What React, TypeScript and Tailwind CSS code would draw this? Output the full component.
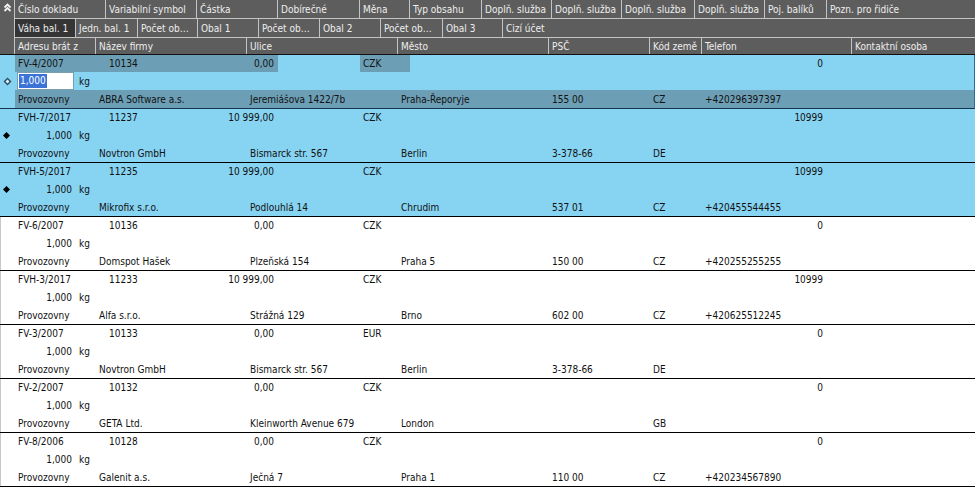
import React from 'react';

const FONT = "font-['DejaVu_Sans_Condensed','Liberation_Sans',sans-serif]";

// column widths (px) incl. the 1px separator at the right edge
const ROW1 = [91, 91, 81, 82, 50, 72, 70, 70, 73, 70, 62];
const ROW2 = [61, 62, 60, 61, 61, 61, 62, 60];
const ROW3 = [81, 151, 151, 151, 101, 52, 150];

const HEAD1 = ['Číslo dokladu', 'Variabilní symbol', 'Částka', 'Dobírečné', 'Měna', 'Typ obsahu', 'Doplň. služba', 'Doplň. služba', 'Doplň. služba', 'Doplň. služba', 'Poj. balíků', 'Pozn. pro řidiče'];
const HEAD2 = ['Váha bal. 1', 'Jedn. bal. 1', 'Počet ob…', 'Obal 1', 'Počet ob…', 'Obal 2', 'Počet ob…', 'Obal 3', 'Cizí účet'];
const HEAD3 = ['Adresu brát z', 'Název firmy', 'Ulice', 'Město', 'PSČ', 'Kód země', 'Telefon', 'Kontaktní osoba'];

type Rec = {
  doc: string; vs: string; amt: string; cur: string; poj: string;
  firm: string; street: string; city: string; zip: string; cc: string; tel: string;
  state?: 'active' | 'sel';
};

const RECORDS: Rec[] = [
  { doc: 'FV-4/2007', vs: '10134', amt: '0,00', cur: 'CZK', poj: '0', firm: 'ABRA Software a.s.', street: 'Jeremiášova 1422/7b', city: 'Praha-Řeporyje', zip: '155 00', cc: 'CZ', tel: '+420296397397', state: 'active' },
  { doc: 'FVH-7/2017', vs: '11237', amt: '10 999,00', cur: 'CZK', poj: '10999', firm: 'Novtron GmbH', street: 'Bismarck str. 567', city: 'Berlin', zip: '3-378-66', cc: 'DE', tel: '', state: 'sel' },
  { doc: 'FVH-5/2017', vs: '11235', amt: '10 999,00', cur: 'CZK', poj: '10999', firm: 'Mikrofix s.r.o.', street: 'Podlouhlá 14', city: 'Chrudim', zip: '537 01', cc: 'CZ', tel: '+420455544455', state: 'sel' },
  { doc: 'FV-6/2007', vs: '10136', amt: '0,00', cur: 'CZK', poj: '0', firm: 'Domspot Hašek', street: 'Plzeňská 154', city: 'Praha 5', zip: '150 00', cc: 'CZ', tel: '+420255255255' },
  { doc: 'FVH-3/2017', vs: '11233', amt: '10 999,00', cur: 'CZK', poj: '10999', firm: 'Alfa s.r.o.', street: 'Strážná 129', city: 'Brno', zip: '602 00', cc: 'CZ', tel: '+420625512245' },
  { doc: 'FV-3/2007', vs: '10133', amt: '0,00', cur: 'EUR', poj: '0', firm: 'Novtron GmbH', street: 'Bismarck str. 567', city: 'Berlin', zip: '3-378-66', cc: 'DE', tel: '' },
  { doc: 'FV-2/2007', vs: '10132', amt: '0,00', cur: 'CZK', poj: '0', firm: 'GETA Ltd.', street: 'Kleinworth Avenue 679', city: 'London', zip: '', cc: 'GB', tel: '' },
  { doc: 'FV-8/2006', vs: '10128', amt: '0,00', cur: 'CZK', poj: '0', firm: 'Galenit a.s.', street: 'Ječná 7', city: 'Praha 1', zip: '110 00', cc: 'CZ', tel: '+420234567890' },
];

const HeadRow: React.FC<{ widths: number[]; labels: string[]; h: string; last?: boolean; dark?: number }> = ({ widths, labels, h, last, dark }) => (
  <div className={`flex ${h} ${last ? '' : 'border-b border-[#c4c4c4]'}`}>
    {labels.map((l, i) => (
      <div
        key={i}
        style={i < widths.length ? { width: widths[i] } : undefined}
        className={`${i < widths.length ? 'shrink-0 border-r border-[#c4c4c4]' : 'flex-1'} ${dark === i ? 'bg-[#353535]' : ''} pl-[3px] flex items-center overflow-hidden whitespace-nowrap`}
      >
        {l}
      </div>
    ))}
  </div>
);

const Cell: React.FC<{ w?: number; right?: boolean; hl?: boolean; children?: React.ReactNode }> = ({ w, right, hl, children }) => (
  <div
    style={w ? { width: w } : undefined}
    className={`${w ? 'shrink-0' : 'flex-1'} flex items-center whitespace-nowrap overflow-hidden ${right ? 'justify-end pr-[4px]' : 'pl-[3px]'} ${hl ? 'bg-[#6c9fb5]' : ''}`}
  >
    {children}
  </div>
);

const Diamond: React.FC<{ active?: boolean }> = ({ active }) =>
  active ? (
    <svg width="9" height="9" viewBox="0 0 9 9">
      <path d="M4.5 0.5 L8.5 4.5 L4.5 8.5 L0.5 4.5 Z" fill="#2c4f66" />
      <path d="M4.5 2.5 L6.5 4.5 L4.5 6.5 L2.5 4.5 Z" fill="#dff3fb" />
    </svg>
  ) : (
    <svg width="7" height="7" viewBox="0 0 7 7">
      <path d="M3.5 0 L7 3.5 L3.5 7 L0 3.5 Z" fill="#000" />
    </svg>
  );

const Record: React.FC<{ r: Rec }> = ({ r }) => {
  const blue = r.state === 'active' || r.state === 'sel';
  const active = r.state === 'active';
  return (
    <div className={`flex border-b ${active ? 'border-[#14364d] border-r-[#2a6e99] border-r' : 'border-black'} ${blue ? 'bg-[#87d3f2]' : 'bg-white'}`}>
      <div className={`w-[15px] shrink-0 flex flex-col border-l ${blue ? 'border-[#87d3f2]' : 'border-[#c8c8c8]'}`}>
        <div className="h-[17px]" />
        <div className="h-[18px] flex items-center pl-[2px]">{blue && <Diamond active={active} />}</div>
        <div className="h-[18px]" />
      </div>
      <div className="flex-1 flex flex-col min-w-0">
        <div className="flex h-[17px]">
          <Cell w={ROW1[0]} hl={active}>{r.doc}</Cell>
          <Cell w={ROW1[1]} hl={active}>{r.vs}</Cell>
          <Cell w={ROW1[2]} hl={active} right>{r.amt}</Cell>
          <Cell w={ROW1[3]} />
          <Cell w={ROW1[4]} hl={active}>{r.cur}</Cell>
          <Cell w={ROW1[5]} />
          <Cell w={ROW1[6]} />
          <Cell w={ROW1[7]} />
          <Cell w={ROW1[8]} />
          <Cell w={ROW1[9]} />
          <Cell w={ROW1[10]} right>{r.poj}</Cell>
          <Cell />
        </div>
        <div className="flex h-[18px]">
          {active ? (
            <div style={{ width: ROW2[0] }} className="shrink-0 flex items-center pl-[2px]">
              <div className="w-[57px] h-[18px] bg-white border border-[#7a9fb3] flex items-center pl-[1px]">
                <span className="bg-[#3b73d6] text-white leading-[14px] px-[1px]">1,000</span>
              </div>
            </div>
          ) : (
            <Cell w={ROW2[0]} right>1,000</Cell>
          )}
          <Cell w={ROW2[1]}>kg</Cell>
          <Cell />
        </div>
        <div className={`flex h-[18px] ${active ? 'bg-[#6c9fb5]' : ''}`}>
          <Cell w={ROW3[0]}>Provozovny</Cell>
          <Cell w={ROW3[1]}>{r.firm}</Cell>
          <Cell w={ROW3[2]}>{r.street}</Cell>
          <Cell w={ROW3[3]}>{r.city}</Cell>
          <Cell w={ROW3[4]}>{r.zip}</Cell>
          <Cell w={ROW3[5]}>{r.cc}</Cell>
          <Cell w={ROW3[6]}>{r.tel}</Cell>
          <Cell />
        </div>
      </div>
    </div>
  );
};

export default function App() {
  return (
    <div className={`w-[975px] h-[491px] overflow-hidden bg-white text-[10px] text-[#111] ${FONT}`}>
      {/* column header block */}
      <div className="flex bg-[#5d5d5d] text-[#eeeeee] border-b border-[#111]">
        <div className="w-[15px] shrink-0 border-r border-[#c4c4c4] flex justify-center pt-[3px]">
          <svg width="9" height="9" viewBox="0 0 9 9" fill="none" stroke="#f2f2f2" strokeWidth="1.8">
            <path d="M1.5 4.5 L4.5 1.5 L7.5 4.5" />
            <path d="M1.5 8 L4.5 5 L7.5 8" />
          </svg>
        </div>
        <div className="flex-1 flex flex-col min-w-0">
          <HeadRow widths={ROW1} labels={HEAD1} h="h-[19px]" />
          <HeadRow widths={ROW2} labels={HEAD2} h="h-[19px]" dark={0} />
          <HeadRow widths={ROW3} labels={HEAD3} h="h-[16px]" last />
        </div>
      </div>
      {RECORDS.map((r, i) => (
        <Record key={i} r={r} />
      ))}
    </div>
  );
}
